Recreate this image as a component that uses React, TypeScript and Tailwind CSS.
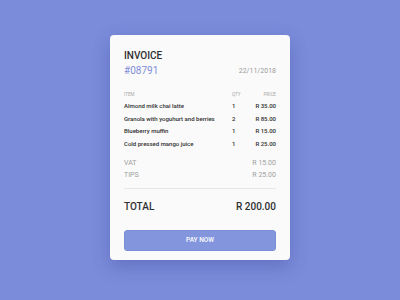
import React from "react";

const items = [
  { name: "Almond milk chai latte", qty: 1, price: "R 35.00" },
  { name: "Granola with yoguhurt and berries", qty: 2, price: "R 85.00" },
  { name: "Blueberry muffin", qty: 1, price: "R 15.00" },
  { name: "Cold pressed mango juice", qty: 1, price: "R 25.00" },
];

const extras = [
  { label: "VAT", value: "R 15.00" },
  { label: "TIPS", value: "R 25.00" },
];

export default function App() {
  return (
    <div
      className="w-[400px] h-[300px] bg-[#7b8cdb] flex justify-center pt-[35px]"
      style={{ fontFamily: "Roboto, 'Liberation Sans', sans-serif" }}
    >
      <div className="w-[180px] h-[225px] bg-[#fafafa] rounded-[4px] shadow-[0_6px_18px_rgba(40,50,130,0.3)] px-[14px] pt-[14px]">
        {/* Header */}
        <p className="h-[14px] leading-[14px] text-[10px] font-medium text-[#2f2f2f]">INVOICE</p>
        <div className="mt-[1px] h-[14px] flex items-center justify-between">
          <span className="text-[10px] leading-[14px] text-[#7f8ed6]">#08791</span>
          <span className="text-[7px] leading-[14px] text-[#9b9b9b]">22/11/2018</span>
        </div>

        {/* Items */}
        <div className="mt-[11.5px] h-[10px] flex items-center text-[4.6px] leading-[10px] text-[#a8a8a8]">
          <span className="w-[108px]">ITEM</span>
          <span className="flex-1">QTY</span>
          <span>PRICE</span>
        </div>
        <div className="mt-[0.5px]">
          {items.map((item) => (
            <div key={item.name} className="h-[12.7px] flex items-center text-[6px] leading-[12.7px] font-medium text-[#2f2f2f]">
              <span className="w-[108px] whitespace-nowrap">{item.name}</span>
              <span className="flex-1">{item.qty}</span>
              <span>{item.price}</span>
            </div>
          ))}
        </div>

        {/* VAT / tips */}
        <div className="mt-[6px]">
          {extras.map((e) => (
            <div key={e.label} className="h-[12.7px] flex items-center justify-between text-[7px] leading-[12.7px] text-[#9d9d9d]">
              <span>{e.label}</span>
              <span>{e.value}</span>
            </div>
          ))}
        </div>

        <div className="mt-[6px] h-px bg-[#e6e6e6]" />

        {/* Total */}
        <div className="mt-[10px] h-[16px] flex items-center justify-between text-[10px] leading-[16px] font-medium text-[#2f2f2f]">
          <span>TOTAL</span>
          <span>R 200.00</span>
        </div>

        <button className="mt-[15px] w-full h-[21px] rounded-[3px] bg-[#8396dd] border border-[#7b8ed8] text-white text-[6.5px] font-medium flex items-center justify-center">
          PAY NOW
        </button>
      </div>
    </div>
  );
}
